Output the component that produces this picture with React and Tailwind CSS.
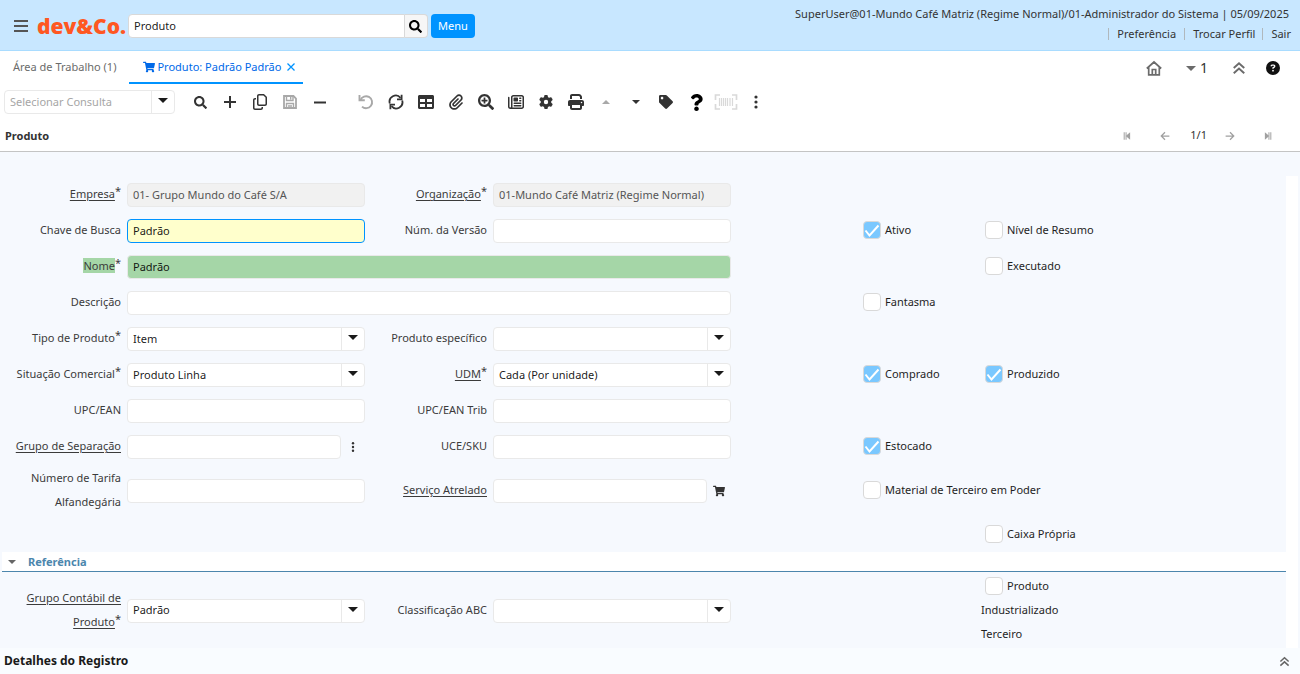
import React from "react";
import { FaSearch, FaTable, FaSearchPlus, FaTag, FaShoppingCart, FaQuestion } from "react-icons/fa";
import { FaRegCopy, FaCircleQuestion, FaGear, FaPaperclip, FaRegNewspaper, FaPrint } from "react-icons/fa6";

const Icon = ({ size = 16, children, className = "" }) => (
  <svg width={size} height={size} viewBox="0 0 16 16" fill="none" stroke="currentColor" className={className} aria-hidden="true">
    {children}
  </svg>
);

const PlusIcon = () => (
  <Icon><path d="M8 2v12M2 8h12" strokeWidth="2" /></Icon>
);
const MinusIcon = () => (
  <Icon><path d="M2 8.500h12" strokeWidth="2" /></Icon>
);
const SaveIcon = () => (
  <Icon>
    <path d="M2 2h9.500l2.500 2.500V14H2z" strokeWidth="1.800" />
    <path d="M4.500 2v4.500h6.500V2M4.500 14V9.500h7V14M8.700 3v2.500M6 12h4" strokeWidth="1.400" />
  </Icon>
);
const UndoIcon = () => (
  <Icon>
    <path d="M2.500 6A6 6 0 1 1 4 12.600" strokeWidth="1.900" />
    <path d="M1.500 1v5.300h5.300" strokeWidth="1.900" />
  </Icon>
);
const RefreshIcon = () => (
  <Icon>
    <path d="M1.800 9.500A6.200 6.200 0 0 1 12.500 3.800M14.200 6.500A6.200 6.200 0 0 1 3.500 12.200" strokeWidth="1.800" />
    <path d="M13.600.8v4.500H9M2.400 15.200v-4.500H7" strokeWidth="1.800" />
  </Icon>
);
const CaretDown = ({ size = 10 }) => (
  <svg width={size} height={size / 2} viewBox="0 0 10 5" fill="currentColor" aria-hidden="true">
    <path d="M0 0h10L5 5z" />
  </svg>
);
const CaretUp = () => (
  <svg width="8" height="4" viewBox="0 0 10 5" fill="currentColor" aria-hidden="true">
    <path d="M0 5h10L5 0z" />
  </svg>
);
const BarcodeIcon = () => (
  <svg width="24" height="16" viewBox="0 0 24 16" fill="none" stroke="currentColor" aria-hidden="true">
    <path d="M6 1H1.500v5M18 1h4.500v5M6 15H1.500v-5M18 15h4.500v-5" strokeWidth="1.700" />
    <path d="M5.500 4v8M7.500 4v8M9.500 4v8M11.500 4v8M13.500 4v8M16 4v8M18.500 4v8" strokeWidth="1.200" />
  </svg>
);
const DotsIcon = ({ size = 16 }) => (
  <Icon size={size}>
    <g fill="currentColor" stroke="none">
      <circle cx="8" cy="3" r="1.600" />
      <circle cx="8" cy="8" r="1.600" />
      <circle cx="8" cy="13" r="1.600" />
    </g>
  </Icon>
);
const HomeIcon = () => (
  <Icon>
    <path d="M.8 8.500 8 2l7.200 6.500M2.700 7.500v7.300h10.600V7.500M6.300 14.500V9.500h3.400v5" strokeWidth="1.700" />
  </Icon>
);
const DoubleUp = ({ size = 16 }) => (
  <Icon size={size}><path d="M2 8 8 2.500 14 8M2 14 8 8.500 14 14" strokeWidth="2.200" /></Icon>
);
const FirstIcon = () => (
  <Icon size={10}><path d="M3.500 2v12M6.500 2v12" strokeWidth="1.600" /><path d="M13 2v12L6 8z" fill="currentColor" stroke="none" /></Icon>
);
const LastIcon = () => (
  <Icon size={10}><path d="M12.500 2v12M9.500 2v12" strokeWidth="1.600" /><path d="M3 2v12l7-6z" fill="currentColor" stroke="none" /></Icon>
);
const ArrowIcon = ({ flip }) => (
  <Icon size={10} className={flip ? "rotate-180" : ""}><path d="M15 8H2M8 2 2 8l6 6" strokeWidth="2" /></Icon>
);

const tools = [
  ["Localizar", <FaSearch size={13} />],
  ["Novo", <PlusIcon />],
  ["Copiar", <FaRegCopy size={16} />],
  ["Salvar", <SaveIcon />, "text-[#a8a8a8]"],
  ["Excluir", <MinusIcon />],
  ["Desfazer", <UndoIcon />, "ml-4 text-[#a8a8a8]"],
  ["Atualizar", <RefreshIcon />],
  ["Grade", <FaTable size={16} />],
  ["Anexo", <FaPaperclip size={16} />],
  ["Zoom", <FaSearchPlus size={16} />],
  ["Relatório", <FaRegNewspaper size={16} />],
  ["Processo", <FaGear size={14} />],
  ["Imprimir", <FaPrint size={16} />],
  ["Registro pai", <CaretUp />, "text-[#a8a8a8]"],
  ["Detalhe", <CaretDown size={8} />],
  ["Etiqueta", <FaTag size={14} />],
  ["Ajuda", <FaQuestion size={17} />, "text-black"],
  ["Código de barras", <BarcodeIcon />, "text-[#d9d9d9]"],
  ["Mais", <DotsIcon />],
];

const fieldBox = "h-6 w-full min-w-0 rounded border px-[5px] text-[11px] outline-none";
const plain = "border-[#e9e9e9] bg-white text-black/90";

function Label({ id, text, required, link, mark }) {
  return (
    <label htmlFor={id} className="self-center pr-[3px] pb-[2px] pl-2 text-right leading-6 text-[#3b3b3b]">
      <span className={`${link ? "underline underline-offset-2" : ""} ${mark ? "bg-[#a5d6a7]" : ""}`}>{text}</span>
      {required && <sup className="-top-[3px] text-[11px] leading-none">*</sup>}
    </label>
  );
}

const SelectArrow = () => (
  <span className="pointer-events-none absolute inset-y-px right-0 flex w-6 justify-center border-l border-[#e9e9e9] pt-[7px] pr-[2px] text-[#1a1a1a]">
    <CaretDown />
  </span>
);

function Field({ id, kind, value, tone = plain, wide }) {
  if (kind === "select")
    return (
      <div className="self-center px-[3px]">
        <div className="relative flex">
          <select id={id} defaultValue={value} className={`${fieldBox} ${plain} appearance-none pr-7`}>
            <option value={value}>{value}</option>
          </select>
          <SelectArrow />
        </div>
      </div>
    );
  return (
    <div className={`flex items-center self-center px-[3px] ${wide ? "col-span-3" : ""}`}>
      <input id={id} type="text" defaultValue={value} disabled={kind === "locked"} className={`${fieldBox} pb-[2px] ${tone}`} />
      {kind === "lookup" && (
        <button type="button" aria-label="Opções" className="flex w-6 shrink-0 justify-center text-[#333]">
          <DotsIcon size={12} />
        </button>
      )}
      {kind === "product" && (
        <button type="button" aria-label="Buscar produto" className="flex w-6 shrink-0 justify-center text-[#333]">
          <FaShoppingCart size={12} />
        </button>
      )}
    </div>
  );
}

function Check({ text, checked, className = "" }) {
  return (
    <label className={`self-center px-[3px] pb-[2px] leading-6 text-[#1f1f1f] ${className}`}>
      <span className="mr-1 mb-[2px] ml-1 inline-grid size-[18px] align-middle">
        <input
          type="checkbox"
          defaultChecked={checked}
          className="peer col-start-1 row-start-1 size-[18px] appearance-none rounded border border-[#d9d9d9] bg-white checked:bg-[#7ac8ff]"
        />
        <svg viewBox="0 0 18 18" className="pointer-events-none col-start-1 row-start-1 hidden size-[18px] peer-checked:block" fill="none" stroke="white" strokeWidth="2">
          <path d="m2.500 9.500 4 5 9-10" />
        </svg>
      </span>
      {text}
    </label>
  );
}

const rowGrid = "grid grid-cols-[122fr_244fr_122fr_244fr_122fr_122fr_122fr_186fr] pl-[2px]";
const row = `${rowGrid} min-h-9`;
const locked = "border-[#e9e9e9] bg-[#f1f1f1] text-[#555]";

export default function App() {
  return (
    <div className="flex min-h-screen flex-col bg-white font-['Noto_Sans',sans-serif] text-[11px] text-[#333]">
      <header className="flex h-[51px] items-center border-b border-[#a9dcff] bg-[#c8e7ff] pt-[2px]">
        <button type="button" aria-label="Abrir menu" className="ml-[14px] flex flex-col gap-[3px] [&>i]:h-[2px] [&>i]:w-[14px] [&>i]:bg-[#555]">
          <i /><i /><i />
        </button>
        <a href="#" className="ml-[9px] w-[87px] font-['Open_Sans',sans-serif] text-[21px] leading-none font-extrabold whitespace-nowrap text-[#ff5722]">dev&amp;Co.</a>
        <div className="ml-1 flex h-6 w-[300px]">
          <input aria-label="Pesquisar" defaultValue="Produto" className="w-[277px] rounded-l border border-[#d9d9d9] bg-white px-[5px] text-black/90 outline-none" />
          <button type="button" aria-label="Buscar" className="flex w-[23px] items-center justify-center rounded-r border border-l-0 border-[#d9d9d9] bg-[#f6f6f6] pr-px text-black">
            <FaSearch size={13} />
          </button>
        </div>
        <button type="button" className="ml-[3px] h-6 rounded bg-[#0093ff] px-[7px] text-white">Menu</button>
        <div className="mr-[9px] ml-auto flex flex-col items-end pb-[5px]">
          <p className="mr-[2px] leading-5">SuperUser@01-Mundo Café Matriz (Regime Normal)/01-Administrador do Sistema | 05/09/2025</p>
          <nav className="flex h-5 items-center">
            <a href="#" className="border-l border-[#b0b8bd] px-2 leading-3">Preferência</a>
            <a href="#" className="border-l border-[#b0b8bd] pr-[7px] pl-2 leading-3">Trocar Perfil</a>
            <a href="#" className="border-l border-[#b0b8bd] pl-2 leading-3">Sair</a>
          </nav>
        </div>
      </header>

      <div className="flex h-[33px] items-stretch">
        <a href="#" className="flex items-center px-[13px] text-[#6b6b6b]">Área de Trabalho (1)</a>
        <div className="flex items-center border-b-2 border-[#0093ff] pt-px pr-2 pl-[14px] text-[#0069e8]">
          <FaShoppingCart size={12} />
          <a href="#" className="ml-[2px]">Produto: Padrão Padrão</a>
          <button type="button" aria-label="Fechar" className="ml-[6px] text-[#0093ff]">
            <Icon size={8}><path d="m1 1 14 14M15 1 1 15" strokeWidth="2.500" /></Icon>
          </button>
        </div>
        <div className="mr-5 ml-auto flex items-center pt-px text-[#6b6b6b]">
          <button type="button" aria-label="Início"><HomeIcon /></button>
          <button type="button" className="ml-6 flex items-center gap-1">
            <CaretDown />
            <span className="text-sm text-[#333]">1</span>
          </button>
          <button type="button" aria-label="Recolher" className="ml-6"><DoubleUp size={14} /></button>
          <button type="button" aria-label="Ajuda" className="ml-5 text-[#111]"><FaCircleQuestion size={14} /></button>
        </div>
      </div>

      <div className="flex h-9 items-center pl-1" role="toolbar">
        <div className="relative mr-[10px] flex w-[171px]">
          <select aria-label="Selecionar Consulta" className="h-6 w-full appearance-none rounded border border-[#e9e9e9] bg-white pr-7 pl-[5px] text-[#a6a6a6] outline-none">
            <option>Selecionar Consulta</option>
          </select>
          <SelectArrow />
        </div>
        {tools.map(([name, icon, cls]) => (
          <button key={name} type="button" aria-label={name} className={`flex h-6 w-[30px] items-center justify-center ${cls || ""}`}>
            {icon}
          </button>
        ))}
      </div>

      <div className="flex h-8 items-center border-b border-[#c4c4c4] pt-px pr-[27px] pl-[5px]">
        <h1 className="font-bold">Produto</h1>
        <div className="ml-auto flex items-center text-[#a0a0a0]">
          <button type="button" aria-label="Primeiro"><FirstIcon /></button>
          <button type="button" aria-label="Anterior" className="ml-7"><ArrowIcon /></button>
          <span className="mr-[18px] ml-5 -mt-px text-[#333]">1/1</span>
          <button type="button" aria-label="Próximo"><ArrowIcon flip /></button>
          <button type="button" aria-label="Último" className="ml-7"><LastIcon /></button>
        </div>
      </div>

      <main className="flex-1 bg-[#f6f9fe] pt-6">
        <div className="mr-[2px] border-r-12 border-white pt-px">
          <div className={row}>
            <Label id="empresa" text="Empresa" required link />
            <Field id="empresa" kind="locked" value="01- Grupo Mundo do Café S/A" tone={locked} />
            <Label id="org" text="Organização" required link />
            <Field id="org" kind="locked" value="01-Mundo Café Matriz (Regime Normal)" tone={locked} />
          </div>
          <div className={row}>
            <Label id="chave" text="Chave de Busca" />
            <Field id="chave" value="Padrão" tone="border-[#0093ff] bg-[#ffffcc] text-black/90" />
            <Label id="versao" text="Núm. da Versão" />
            <Field id="versao" />
            <Check text="Ativo" checked className="col-start-6" />
            <Check text="Nível de Resumo" />
          </div>
          <div className={row}>
            <Label id="nome" text="Nome" required mark />
            <Field id="nome" value="Padrão" wide tone="border-[#e9e9e9] bg-[#a5d6a7] text-black/90" />
            <Check text="Executado" className="col-start-7" />
          </div>
          <div className={row}>
            <Label id="descricao" text="Descrição" />
            <Field id="descricao" wide />
            <Check text="Fantasma" className="col-start-6" />
          </div>
          <div className={row}>
            <Label id="tipo" text="Tipo de Produto" required />
            <Field id="tipo" kind="select" value="Item" />
            <Label id="especifico" text="Produto específico" />
            <Field id="especifico" kind="select" />
          </div>
          <div className={row}>
            <Label id="situacao" text="Situação Comercial" required />
            <Field id="situacao" kind="select" value="Produto Linha" />
            <Label id="udm" text="UDM" required link />
            <Field id="udm" kind="select" value="Cada (Por unidade)" />
            <Check text="Comprado" checked className="col-start-6" />
            <Check text="Produzido" checked />
          </div>
          <div className={row}>
            <Label id="upc" text="UPC/EAN" />
            <Field id="upc" />
            <Label id="upctrib" text="UPC/EAN Trib" />
            <Field id="upctrib" />
          </div>
          <div className={row}>
            <Label id="separacao" text="Grupo de Separação" link />
            <Field id="separacao" kind="lookup" />
            <Label id="uce" text="UCE/SKU" />
            <Field id="uce" />
            <Check text="Estocado" checked className="col-start-6" />
          </div>
          <div className={`${rowGrid} min-h-13`}>
            <Label id="tarifa" text="Número de Tarifa Alfandegária" />
            <Field id="tarifa" />
            <Label id="servico" text="Serviço Atrelado" link />
            <Field id="servico" kind="product" />
            <Check text="Material de Terceiro em Poder" className="col-span-2 col-start-6" />
          </div>
          <div className={`${rowGrid} min-h-[35px]`}>
            <Check text="Caixa Própria" className="col-start-7" />
          </div>

          <h2 className="ml-[2px] flex h-5 items-center border-b border-[#4c86ad] bg-white pt-px pl-[6px] font-bold text-[#4c86ad]">
            <button type="button" className="flex items-center gap-3">
              <span className="text-[#666]"><CaretDown size={8} /></span>
              Referência
            </button>
          </h2>
          <div className={`${rowGrid} min-h-[76px] pt-px`}>
            <Label id="contabil" text="Grupo Contábil de Produto" required link />
            <Field id="contabil" kind="select" value="Padrão" />
            <Label id="abc" text="Classificação ABC" />
            <Field id="abc" kind="select" />
            <Check text="Produto Industrializado Terceiro" className="col-start-7" />
          </div>
        </div>
      </main>

      <footer className="flex h-[26px] items-center justify-between bg-[#f9fcff] pr-[10px] pl-1">
        <h2 className="text-xs font-bold text-[#1a1a1a]">Detalhes do Registro</h2>
        <button type="button" aria-label="Expandir detalhes" className="text-[#666]"><DoubleUp size={11} /></button>
      </footer>
    </div>
  );
}
